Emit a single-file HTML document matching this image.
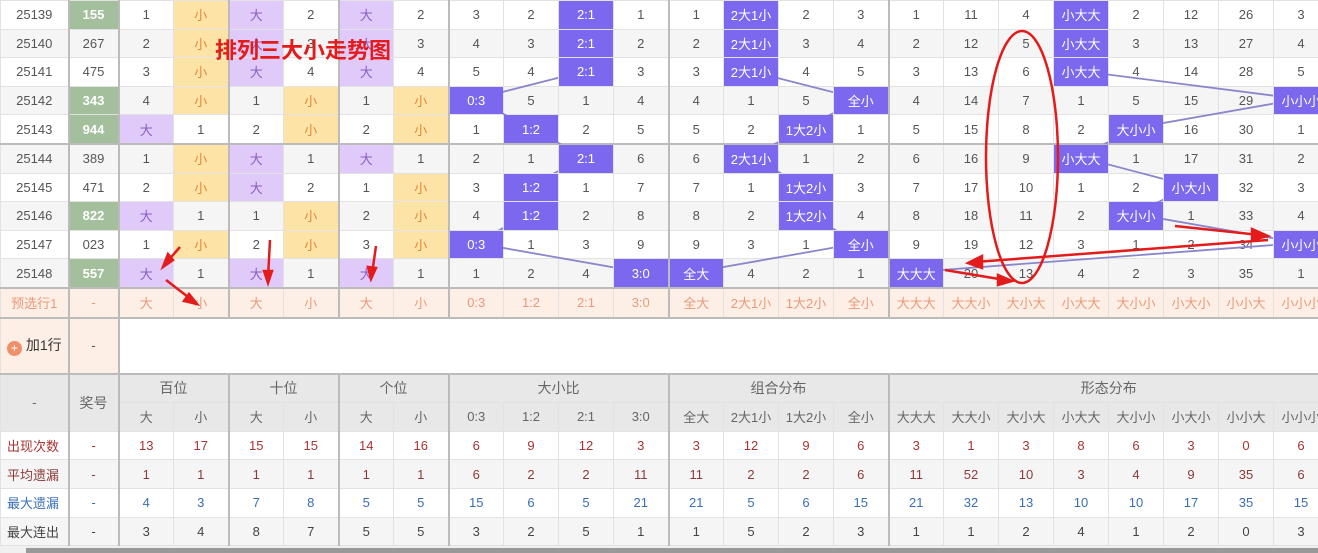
<!DOCTYPE html>
<html><head><meta charset="utf-8"><style>
body{margin:0;width:1318px;height:553px;overflow:hidden;background:#fff;font-family:"Liberation Sans","Noto Sans CJK SC",sans-serif;position:relative}
table{border-collapse:collapse;table-layout:fixed;width:1328px;position:absolute;left:0;top:0}
td{border:1px solid #e2e2e2;text-align:center;font-size:13px;color:#555;padding:0;white-space:nowrap;overflow:hidden;height:27.6px}
tr.e td{background:#f5f5f5}
.g{border-left:2px solid #bbb}
.n{background:#a3bf9c!important;color:#fff;font-weight:bold}
.x{background:#fde3a5!important;color:#e0883a}
.d{background:#e0cafa!important;color:#8a5ec4}
.b{background:#7b68ee!important;color:#fff}
tr.sep td{border-top:2px solid #bbb}
tr.p td{background:#fdeee6;color:#eb9a78}
tr.h td{background:#e8e8e8;color:#666}
.r1 td{color:#a33}.r2 td{color:#8b3a3a}.r3 td{color:#3a6fb5}.r4 td{color:#444}
td.l{text-align:left;padding-left:6px}
</style></head><body>
<table>
<colgroup><col style="width:68px"><col style="width:50px"><col span="22" style="width:55px"></colgroup>
<tr><td>25139</td><td class="n g">155</td><td class="g">1</td><td class="x">小</td><td class="d g">大</td><td>2</td><td class="d g">大</td><td>2</td><td class="g">3</td><td>2</td><td class="b">2:1</td><td>1</td><td class="g">1</td><td class="b">2大1小</td><td>2</td><td>3</td><td class="g">1</td><td>11</td><td>4</td><td class="b">小大大</td><td>2</td><td>12</td><td>26</td><td>3</td></tr>
<tr class="e"><td>25140</td><td class="g">267</td><td class="g">2</td><td class="x">小</td><td class="d g">大</td><td>3</td><td class="d g">大</td><td>3</td><td class="g">4</td><td>3</td><td class="b">2:1</td><td>2</td><td class="g">2</td><td class="b">2大1小</td><td>3</td><td>4</td><td class="g">2</td><td>12</td><td>5</td><td class="b">小大大</td><td>3</td><td>13</td><td>27</td><td>4</td></tr>
<tr><td>25141</td><td class="g">475</td><td class="g">3</td><td class="x">小</td><td class="d g">大</td><td>4</td><td class="d g">大</td><td>4</td><td class="g">5</td><td>4</td><td class="b">2:1</td><td>3</td><td class="g">3</td><td class="b">2大1小</td><td>4</td><td>5</td><td class="g">3</td><td>13</td><td>6</td><td class="b">小大大</td><td>4</td><td>14</td><td>28</td><td>5</td></tr>
<tr class="e"><td>25142</td><td class="n g">343</td><td class="g">4</td><td class="x">小</td><td class="g">1</td><td class="x">小</td><td class="g">1</td><td class="x">小</td><td class="b g">0:3</td><td>5</td><td>1</td><td>4</td><td class="g">4</td><td>1</td><td>5</td><td class="b">全小</td><td class="g">4</td><td>14</td><td>7</td><td>1</td><td>5</td><td>15</td><td>29</td><td class="b">小小小</td></tr>
<tr><td>25143</td><td class="n g">944</td><td class="d g">大</td><td>1</td><td class="g">2</td><td class="x">小</td><td class="g">2</td><td class="x">小</td><td class="g">1</td><td class="b">1:2</td><td>2</td><td>5</td><td class="g">5</td><td>2</td><td class="b">1大2小</td><td>1</td><td class="g">5</td><td>15</td><td>8</td><td>2</td><td class="b">大小小</td><td>16</td><td>30</td><td>1</td></tr>
<tr class="e sep"><td>25144</td><td class="g">389</td><td class="g">1</td><td class="x">小</td><td class="d g">大</td><td>1</td><td class="d g">大</td><td>1</td><td class="g">2</td><td>1</td><td class="b">2:1</td><td>6</td><td class="g">6</td><td class="b">2大1小</td><td>1</td><td>2</td><td class="g">6</td><td>16</td><td>9</td><td class="b">小大大</td><td>1</td><td>17</td><td>31</td><td>2</td></tr>
<tr><td>25145</td><td class="g">471</td><td class="g">2</td><td class="x">小</td><td class="d g">大</td><td>2</td><td class="g">1</td><td class="x">小</td><td class="g">3</td><td class="b">1:2</td><td>1</td><td>7</td><td class="g">7</td><td>1</td><td class="b">1大2小</td><td>3</td><td class="g">7</td><td>17</td><td>10</td><td>1</td><td>2</td><td class="b">小大小</td><td>32</td><td>3</td></tr>
<tr class="e"><td>25146</td><td class="n g">822</td><td class="d g">大</td><td>1</td><td class="g">1</td><td class="x">小</td><td class="g">2</td><td class="x">小</td><td class="g">4</td><td class="b">1:2</td><td>2</td><td>8</td><td class="g">8</td><td>2</td><td class="b">1大2小</td><td>4</td><td class="g">8</td><td>18</td><td>11</td><td>2</td><td class="b">大小小</td><td>1</td><td>33</td><td>4</td></tr>
<tr><td>25147</td><td class="g">023</td><td class="g">1</td><td class="x">小</td><td class="g">2</td><td class="x">小</td><td class="g">3</td><td class="x">小</td><td class="b g">0:3</td><td>1</td><td>3</td><td>9</td><td class="g">9</td><td>3</td><td>1</td><td class="b">全小</td><td class="g">9</td><td>19</td><td>12</td><td>3</td><td>1</td><td>2</td><td>34</td><td class="b">小小小</td></tr>
<tr class="e"><td>25148</td><td class="n g">557</td><td class="d g">大</td><td>1</td><td class="d g">大</td><td>1</td><td class="d g">大</td><td>1</td><td class="g">1</td><td>2</td><td>4</td><td class="b">3:0</td><td class="b g">全大</td><td>4</td><td>2</td><td>1</td><td class="b g">大大大</td><td>20</td><td>13</td><td>4</td><td>2</td><td>3</td><td>35</td><td>1</td></tr>
<tr class="p sep"><td>预选行1</td><td class="g">-</td><td class="g">大</td><td>小</td><td class="g">大</td><td>小</td><td class="g">大</td><td>小</td><td class="g">0:3</td><td>1:2</td><td>2:1</td><td>3:0</td><td class="g">全大</td><td>2大1小</td><td>1大2小</td><td>全小</td><td class="g">大大大</td><td>大大小</td><td>大小大</td><td>小大大</td><td>大小小</td><td>小大小</td><td>小小大</td><td>小小小</td></tr>
<tr class="sep"><td style="height:54px;background:#fdeee6;color:#333;font-size:14px"><span style="display:inline-block;width:15px;height:15px;border-radius:50%;background:#f0906a;color:#fff;font-size:12px;line-height:15px;vertical-align:-2px;margin-right:4px">+</span>加1行</td><td class="g" style="background:#fdeee6">-</td><td colspan="22" class="g" style="border-right:none"></td></tr>
<tr class="h sep"><td rowspan="2">-</td><td rowspan="2" class="g" style="font-size:14px">奖号</td><td colspan="2" class="g" style="font-size:14px">百位</td><td colspan="2" class="g" style="font-size:14px">十位</td><td colspan="2" class="g" style="font-size:14px">个位</td><td colspan="4" class="g" style="font-size:14px">大小比</td><td colspan="4" class="g" style="font-size:14px">组合分布</td><td colspan="8" class="g" style="font-size:14px">形态分布</td></tr>
<tr class="h"><td class="g">大</td><td>小</td><td class="g">大</td><td>小</td><td class="g">大</td><td>小</td><td class="g">0:3</td><td>1:2</td><td>2:1</td><td>3:0</td><td class="g">全大</td><td>2大1小</td><td>1大2小</td><td>全小</td><td class="g">大大大</td><td>大大小</td><td>大小大</td><td>小大大</td><td>大小小</td><td>小大小</td><td>小小大</td><td>小小小</td></tr>
<tr class="r1"><td class="l">出现次数</td><td class="g">-</td><td class="g">13</td><td>17</td><td class="g">15</td><td>15</td><td class="g">14</td><td>16</td><td class="g">6</td><td>9</td><td>12</td><td>3</td><td class="g">3</td><td>12</td><td>9</td><td>6</td><td class="g">3</td><td>1</td><td>3</td><td>8</td><td>6</td><td>3</td><td>0</td><td>6</td></tr>
<tr class="e r2"><td class="l">平均遗漏</td><td class="g">-</td><td class="g">1</td><td>1</td><td class="g">1</td><td>1</td><td class="g">1</td><td>1</td><td class="g">6</td><td>2</td><td>2</td><td>11</td><td class="g">11</td><td>2</td><td>2</td><td>6</td><td class="g">11</td><td>52</td><td>10</td><td>3</td><td>4</td><td>9</td><td>35</td><td>6</td></tr>
<tr class="r3"><td class="l">最大遗漏</td><td class="g">-</td><td class="g">4</td><td>3</td><td class="g">7</td><td>8</td><td class="g">5</td><td>5</td><td class="g">15</td><td>6</td><td>5</td><td>21</td><td class="g">21</td><td>5</td><td>6</td><td>15</td><td class="g">21</td><td>32</td><td>13</td><td>10</td><td>10</td><td>17</td><td>35</td><td>15</td></tr>
<tr class="e r4"><td class="l">最大连出</td><td class="g">-</td><td class="g">3</td><td>4</td><td class="g">8</td><td>7</td><td class="g">5</td><td>5</td><td class="g">3</td><td>2</td><td>5</td><td>1</td><td class="g">1</td><td>5</td><td>2</td><td>3</td><td class="g">1</td><td>1</td><td>2</td><td>4</td><td>1</td><td>2</td><td>0</td><td>3</td></tr>
</table>
<div style="position:absolute;left:0;top:546px;width:1318px;height:7px;background:#f0f0f0"><div style="position:absolute;left:26px;top:2px;width:1292px;height:5px;background:#999"></div></div>
<svg width="1318" height="553" style="position:absolute;left:0;top:0" fill="none">
<defs><mask id="m" maskUnits="userSpaceOnUse" x="0" y="0" width="1318" height="553">
<rect x="0" y="0" width="1318" height="553" fill="#fff"/>
<g fill="#000">
<rect x="558" y="0" width="55" height="86"/><rect x="448" y="86" width="55" height="29"/><rect x="503" y="115" width="55" height="29"/><rect x="558" y="144" width="55" height="29"/><rect x="503" y="173" width="55" height="57"/><rect x="448" y="230" width="55" height="29"/><rect x="613" y="259" width="55" height="29"/>
<rect x="723" y="0" width="55" height="86"/><rect x="833" y="86" width="55" height="29"/><rect x="778" y="115" width="55" height="29"/><rect x="723" y="144" width="55" height="29"/><rect x="778" y="173" width="55" height="57"/><rect x="833" y="230" width="55" height="29"/><rect x="668" y="259" width="55" height="29"/>
<rect x="1053" y="0" width="55" height="86"/><rect x="1273" y="86" width="55" height="29"/><rect x="1108" y="115" width="55" height="29"/><rect x="1053" y="144" width="55" height="29"/><rect x="1163" y="173" width="55" height="29"/><rect x="1108" y="202" width="55" height="28"/><rect x="1273" y="230" width="55" height="29"/><rect x="888" y="259" width="55" height="29"/>
</g></mask></defs>
<g stroke="#8a86cc" stroke-width="1.8" mask="url(#m)">
<polyline points="585,14 585,42 585,71 475,99 530,128 585,157 530,186 530,214 475,243 640,272"/>
<polyline points="750,14 750,42 750,71 860,99 805,128 750,157 805,186 805,214 860,243 695,272"/>
<polyline points="1080,0 1080,14 1080,42 1080,71 1300,99 1135,128 1080,157 1190,186 1135,214 1300,243 915,272"/>
</g>
<g stroke="#e31b1b" stroke-width="2.5" fill="#e31b1b">
<ellipse cx="1022" cy="157" rx="36" ry="126" fill="none"/>
<line x1="180" y1="247" x2="166" y2="263"/><polygon points="163,267 168,254 173,260"/>
<line x1="166" y1="280" x2="192" y2="300"/><polygon points="197,304 184,301 189,294"/>
<line x1="270" y1="240" x2="268" y2="278"/><polygon points="268,283 264,271 272,271"/>
<line x1="376" y1="246" x2="372" y2="274"/><polygon points="371,279 368,267 376,268"/>
<line x1="945" y1="270" x2="1005" y2="280"/><polygon points="1012,281 998,275 998,285"/>
<line x1="1175" y1="226" x2="1260" y2="235"/><polygon points="1268,236 1252,229 1252,240"/>
<line x1="1268" y1="240" x2="975" y2="262"/><polygon points="968,263 982,256 982,268"/>
</g>
<text x="215" y="58" font-family="Liberation Sans,Noto Sans CJK SC,sans-serif" font-size="22" font-weight="bold" fill="#e31b1b" stroke="none">排列三大小走势图</text>
</svg>
</body></html>
